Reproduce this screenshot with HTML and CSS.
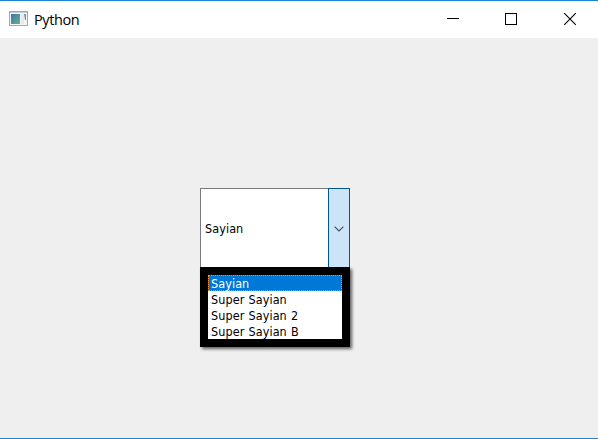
FILE: index.html
```html
<!DOCTYPE html>
<html lang="en">
<head>
<meta charset="utf-8">
<title>Python</title>
<link rel="stylesheet" href="styles.css">
</head>
<body>
<div class="window">
  <header class="titlebar">
    <svg class="app-icon" width="19" height="15" viewBox="0 0 19 15">
      <defs>
        <linearGradient id="pane" x1="0" y1="0" x2="1" y2="1">
          <stop offset="0" stop-color="#3f74a8"/>
          <stop offset="1" stop-color="#62b58a"/>
        </linearGradient>
      </defs>
      <rect x="0.500" y="0.500" width="18" height="14" fill="#f4f5f7" stroke="#a3a8ac"/>
      <rect x="1" y="1" width="17" height="1" fill="#c9cdd1"/>
      <rect x="2" y="3" width="9" height="10" fill="url(#pane)"/>
      <rect x="12" y="3" width="3" height="10" fill="#e6e8eb"/>
      <path d="M15 3h2v6h-1z" fill="#5f9fa8"/>
    </svg>
    <span class="title">Python</span>
    <svg class="controls" width="168" height="37" viewBox="0 0 168 37" fill="none" stroke="#000">
      <path d="M17 17.500h12"/>
      <path d="M75.500 12.500h11v11h-11z" shape-rendering="crispEdges"/>
      <path d="M134.200 12.200l11.600 11.600M145.800 12.200l-11.600 11.600" stroke-width="1.100"/>
    </svg>
  </header>
  <main class="content">
    <div class="combo">
      <div class="value"><span class="label">Sayian</span></div>
      <div class="arrow">
        <svg width="10" height="6" viewBox="0 0 10 6"><path d="M0.600 0.600L5 5L9.400 0.600" fill="none" stroke="#454b50" stroke-width="1.100"/></svg>
      </div>
    </div>
    <ul class="popup">
      <li class="item selected"><span class="label">Sayian</span></li>
      <li class="item"><span class="label">Super Sayian</span></li>
      <li class="item"><span class="label">Super Sayian 2</span></li>
      <li class="item"><span class="label">Super Sayian B</span></li>
    </ul>
  </main>
</div>
</body>
</html>
```
FILE: styles.css
```css
* { box-sizing: border-box; }
body { margin: 0; }
.window {
  width: 598px;
  height: 439px;
  display: flex;
  flex-direction: column;
  border-top: 1px solid #1883d7;
  border-bottom: 1px solid #1883d7;
  background: #efefef;
  overflow: hidden;
}
.titlebar {
  height: 37px;
  flex: none;
  display: flex;
  align-items: center;
  padding-left: 9px;
  background: #fff;
}
.app-icon { margin-bottom: 2px; }
.title {
  margin-left: 6px;
  font: 14.5px/20px "Open Sans", sans-serif;
  letter-spacing: -0.4px;
  color: #000;
}
.controls { margin-left: auto; }
.content {
  width: 150px;
  margin: 150px 0 0 200px;
  font: 12.5px/16px "DejaVu Sans Condensed", "DejaVu Sans", sans-serif;
  font-stretch: condensed;
  letter-spacing: 0.08px;
  word-spacing: 0.5px;
  color: #000;
}
.combo { display: flex; height: 79px; }
.value {
  width: 128px;
  display: flex;
  align-items: center;
  padding: 1px 0 0 4px;
  border: 1px solid #7a7a7a;
  border-width: 1px 0 0 1px;
  background: #fff;
}
.arrow {
  width: 22px;
  display: flex;
  align-items: center;
  justify-content: center;
  padding-top: 2px;
  border: 1px solid #005499;
  border-bottom: 0;
  background: #cce4f7;
}
.popup {
  margin: 0;
  padding: 0;
  list-style: none;
  border: 8px solid #000;
  background: #fff;
  box-shadow: 2px 2px 3px rgba(0, 0, 0, 0.6);
}
.item { height: 16px; padding-left: 3px; line-height: 18px; white-space: nowrap; }
.selected {
  padding-left: 2px;
  line-height: 16px;
  border: 1px dotted #ff8728;
  background: #0078d7;
  color: #fff;
}
```
